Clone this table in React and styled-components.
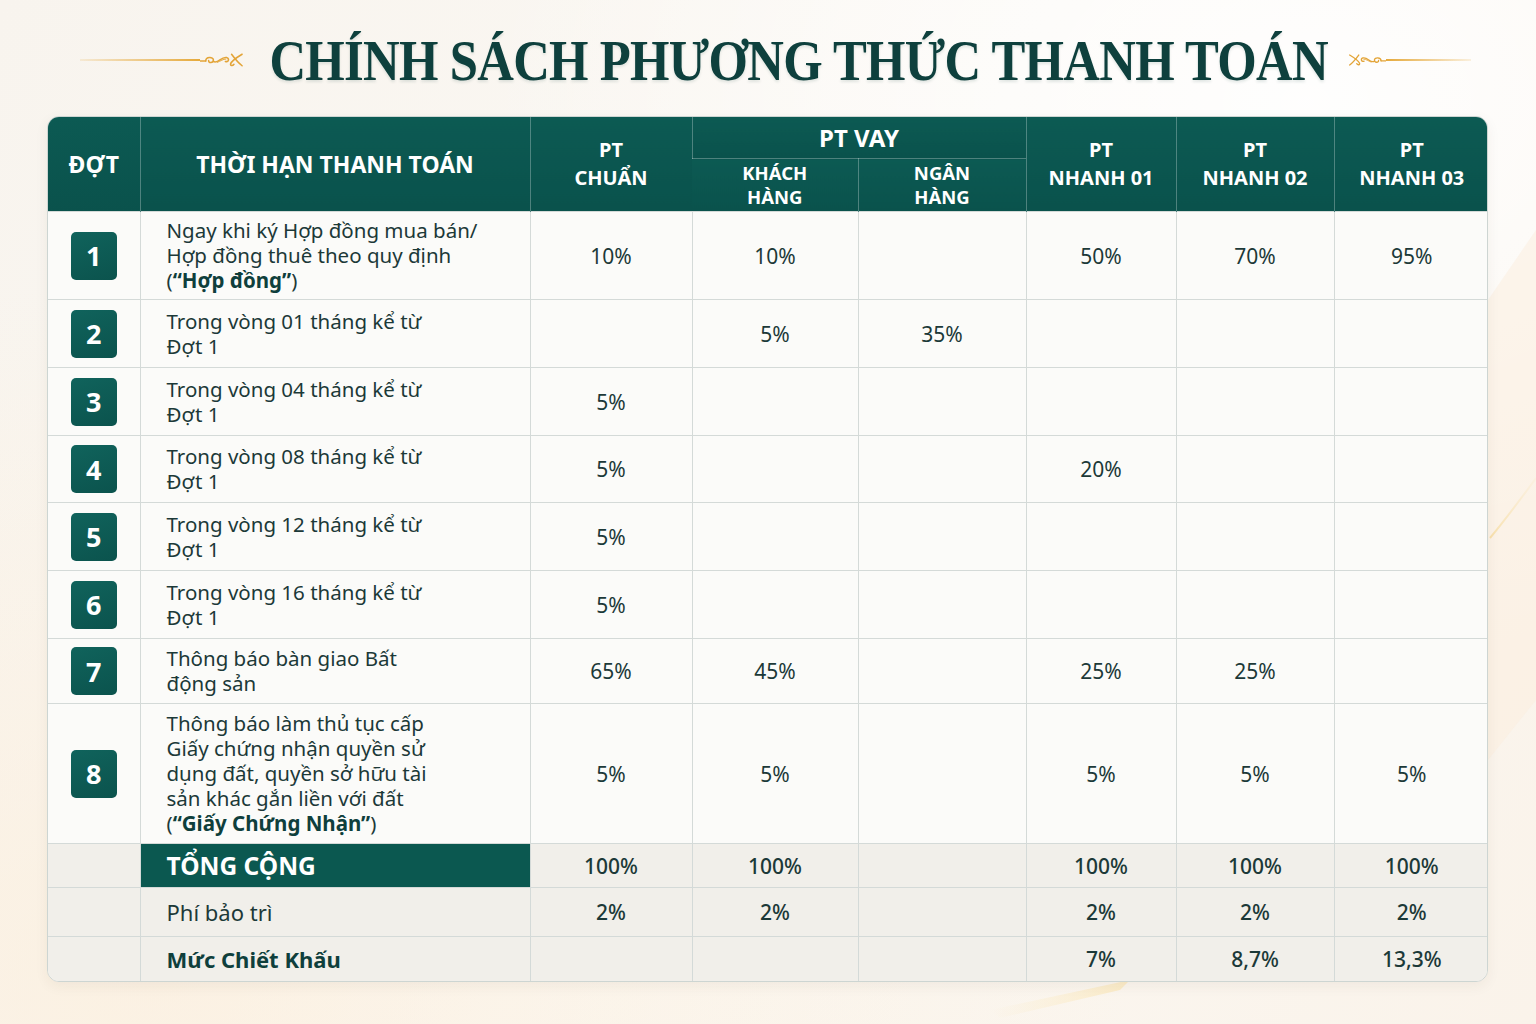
import React from "react";
import styled, { createGlobalStyle } from "styled-components";

const GlobalStyle = createGlobalStyle`
  html, body {
    margin: 0;
    padding: 0;
  }
  body {
    font-family: "Noto Sans", "Lato", sans-serif;
    background: #faf6f0;
  }
`;

const Page = styled.div`
  position: relative;
  width: 1536px;
  height: 1024px;
  overflow: hidden;
  box-sizing: border-box;
  padding: 28px 48px 0 47px;
  background:
    radial-gradient(ellipse at 85% 10%, rgba(255, 255, 255, 0.9), rgba(255, 255, 255, 0) 45%),
    radial-gradient(ellipse at 10% 95%, rgba(252, 236, 214, 0.55), rgba(255, 255, 255, 0) 50%),
    linear-gradient(120deg, #f8f4ee 0%, #fbf8f3 50%, #faf3ea 100%);
`;

const Decor = styled.svg`
  position: absolute;
  inset: 0;
  pointer-events: none;
`;

const TitleRow = styled.div`
  position: relative;
  display: flex;
  align-items: center;
  height: 64px;
  margin-bottom: 24px;
  padding-left: 33px;
`;

const Rule = styled.div`
  display: flex;
  align-items: center;
  flex-direction: ${(p) => (p.$flip ? "row-reverse" : "row")};
  margin: ${(p) => (p.$flip ? "0 0 0 20px" : "0 25px 0 0")};
`;

const RuleLine = styled.div`
  width: ${(p) => p.$w}px;
  height: 1.5px;
  background: linear-gradient(
    ${(p) => (p.$flip ? "270deg" : "90deg")},
    rgba(230, 170, 60, 0.15),
    #e6aa3c
  );
`;

const Flourish = styled.svg`
  width: ${(p) => (p.$flip ? 38 : 44)}px;
  height: 22px;
  transform: ${(p) => (p.$flip ? "scaleX(-1)" : "none")};
`;

const Title = styled.h1`
  margin: 0 -65px;
  font-family: "Liberation Serif", "DejaVu Serif", serif;
  font-weight: 700;
  font-size: 57px;
  letter-spacing: -0.8px;
  color: #0e403d;
  white-space: nowrap;
  transform: scaleX(0.89);
  text-shadow: 0 2px 3px rgba(14, 64, 61, 0.12);
`;

const Frame = styled.div`
  position: relative;
  border: 1px solid #cdd5d2;
  border-radius: 12px;
  overflow: hidden;
  background: #fbfbf9;
  box-shadow: 0 4px 14px rgba(60, 50, 30, 0.06);
`;

const Table = styled.table`
  width: 100%;
  border-collapse: collapse;
  table-layout: fixed;
  color: #1c3938;
`;

const Th = styled.th`
  height: ${(p) => p.$h}px;
  padding: 0 4px;
  background: linear-gradient(180deg, #0c5a53 0%, #0a524c 100%);
  color: #ffffff;
  font-weight: 700;
  font-size: ${(p) => p.$size || 23}px;
  line-height: ${(p) => p.$lh || 28}px;
  text-align: center;
  border-left: 1px solid rgba(255, 255, 255, 0.28);
  border-bottom: ${(p) => (p.$under ? "1px solid rgba(255,255,255,0.28)" : "none")};
  &:first-child {
    border-left: none;
  }
`;

const Td = styled.td`
  height: ${(p) => p.$h}px;
  padding: 0;
  text-align: center;
  vertical-align: middle;
  font-size: 21px;
  font-weight: ${(p) => (p.$strong ? 500 : 400)};
  border-left: 1px solid #d4dad8;
  border-top: 1px solid #d4dad8;
  background: ${(p) => (p.$sum ? "#f1efea" : "#fbfbf9")};
  &:first-child {
    border-left: none;
  }
`;

const DescCell = styled(Td)`
  text-align: left;
  padding-left: 26px;
  font-size: ${(p) => (p.$sum ? 22 : 20.5)}px;
  line-height: 25px;
  font-weight: ${(p) => (p.$bold ? 700 : 400)};
  color: ${(p) => (p.$bold ? "#0f3f3c" : "#1c3938")};
`;

const TotalCell = styled(Td)`
  text-align: left;
  padding-left: 26px;
  background: #0b5850;
  color: #ffffff;
  font-weight: 700;
  font-size: 24.5px;
`;

const Badge = styled.div`
  width: 46px;
  height: 48px;
  margin: 0 auto;
  border-radius: 5px;
  background: linear-gradient(160deg, #10635c, #0b534d);
  color: #ffffff;
  font-weight: 700;
  font-size: 27px;
  display: flex;
  align-items: center;
  justify-content: center;
`;

const Bold = styled.b`
  font-weight: 700;
  color: #0f3f3c;
`;

const FlourishArt = ({ flip }) => (
  <Flourish $flip={flip} viewBox="0 0 46 22" fill="none" stroke="#e3a437" strokeWidth="1.6" strokeLinecap="round">
    <path d="M0 12 H6" />
    <path d="M6 12 C6 7.5, 14 7.5, 14 11 C14 14.5, 8.5 14.5, 9 11.5" />
    <path d="M14 12.5 C19 15.5, 22 7, 28 8.5 C31 9.5, 30 13.5, 26.5 12.5" />
    <path d="M18 13.5 C22 12, 24 10, 27 10" strokeWidth="1" />
    <path d="M33 5 C36 9, 40 14, 44 17" />
    <path d="M44 5 C39 8, 33 12, 32 15 C31.5 17, 34 17.5, 35.5 15.5" />
  </Flourish>
);

const rows = [
  {
    n: 1,
    h: 87,
    desc: (
      <>
        Ngay khi ký Hợp đồng mua bán/
        <br />
        Hợp đồng thuê theo quy định
        <br />
        (<Bold>“Hợp đồng”</Bold>)
      </>
    ),
    vals: ["10%", "10%", "", "50%", "70%", "95%"],
  },
  { n: 2, h: 67, desc: <>Trong vòng 01 tháng kể từ<br />Đợt 1</>, vals: ["", "5%", "35%", "", "", ""] },
  { n: 3, h: 67, desc: <>Trong vòng 04 tháng kể từ<br />Đợt 1</>, vals: ["5%", "", "", "", "", ""] },
  { n: 4, h: 66, desc: <>Trong vòng 08 tháng kể từ<br />Đợt 1</>, vals: ["5%", "", "", "20%", "", ""] },
  { n: 5, h: 67, desc: <>Trong vòng 12 tháng kể từ<br />Đợt 1</>, vals: ["5%", "", "", "", "", ""] },
  { n: 6, h: 67, desc: <>Trong vòng 16 tháng kể từ<br />Đợt 1</>, vals: ["5%", "", "", "", "", ""] },
  { n: 7, h: 64, desc: <>Thông báo bàn giao Bất<br />động sản</>, vals: ["65%", "45%", "", "25%", "25%", ""] },
  {
    n: 8,
    h: 139,
    desc: (
      <>
        Thông báo làm thủ tục cấp
        <br />
        Giấy chứng nhận quyền sử
        <br />
        dụng đất, quyền sở hữu tài
        <br />
        sản khác gắn liền với đất
        <br />
        (<Bold>“Giấy Chứng Nhận”</Bold>)
      </>
    ),
    vals: ["5%", "5%", "", "5%", "5%", "5%"],
  },
];

const colWidths = [92, 390, 162, 166, 168, 150, 158, 155];

export default function App() {
  return (
    <Page>
      <GlobalStyle />
      <Decor width="1536" height="1024" viewBox="0 0 1536 1024">
        <defs>
          <linearGradient id="gold" x1="0" y1="1" x2="1" y2="0">
            <stop offset="0" stopColor="#f3cf6e" stopOpacity="0.9" />
            <stop offset="1" stopColor="#f7e2a6" stopOpacity="0.2" />
          </linearGradient>
          <linearGradient id="wedge" x1="0" y1="0" x2="1" y2="0">
            <stop offset="0" stopColor="#fbe9c0" stopOpacity="0" />
            <stop offset="1" stopColor="#fbe6b4" stopOpacity="0.7" />
          </linearGradient>
        </defs>
        <path d="M1490 538 C1505 520, 1520 500, 1536 478" stroke="url(#gold)" strokeWidth="2" fill="none" />
        <path d="M1488 300 L1536 230 L1536 700 L1488 760 Z" fill="#fbeedd" opacity="0.5" />
        <path d="M990 1010 L1130 980 L1120 990 L1000 1018 Z" fill="url(#wedge)" />
      </Decor>

      <TitleRow>
        <Rule>
          <RuleLine $w={120} />
          <FlourishArt />
        </Rule>
        <Title>CHÍNH SÁCH PHƯƠNG THỨC THANH TOÁN</Title>
        <Rule $flip>
          <RuleLine $flip $w={85} />
          <FlourishArt flip />
        </Rule>
      </TitleRow>

      <Frame>
        <Table>
          <colgroup>
            {colWidths.map((w, i) => (
              <col key={i} style={{ width: w }} />
            ))}
          </colgroup>
          <thead>
            <tr>
              <Th $h={41} rowSpan={2}>ĐỢT</Th>
              <Th $h={41} rowSpan={2}>THỜI HẠN THANH TOÁN</Th>
              <Th $h={41} rowSpan={2} $size={20}>PT<br />CHUẨN</Th>
              <Th $h={41} colSpan={2} $under $size={24}>PT VAY</Th>
              <Th $h={41} rowSpan={2} $size={20}>PT<br />NHANH 01</Th>
              <Th $h={41} rowSpan={2} $size={20}>PT<br />NHANH 02</Th>
              <Th $h={41} rowSpan={2} $size={20}>PT<br />NHANH 03</Th>
            </tr>
            <tr>
              <Th $h={52} $size={18.5} $lh={24}>KHÁCH<br />HÀNG</Th>
              <Th $h={52} $size={18.5} $lh={24}>NGÂN<br />HÀNG</Th>
            </tr>
          </thead>
          <tbody>
            {rows.map((r) => (
              <tr key={r.n}>
                <Td $h={r.h}>
                  <Badge>{r.n}</Badge>
                </Td>
                <DescCell $h={r.h}>{r.desc}</DescCell>
                {r.vals.map((v, i) => (
                  <Td key={i} $h={r.h}>{v}</Td>
                ))}
              </tr>
            ))}
            <tr>
              <Td $h={43} $sum />
              <TotalCell $h={43}>TỔNG CỘNG</TotalCell>
              {["100%", "100%", "", "100%", "100%", "100%"].map((v, i) => (
                <Td key={i} $h={43} $sum $strong>{v}</Td>
              ))}
            </tr>
            <tr>
              <Td $h={48} $sum />
              <DescCell $h={48} $sum>Phí bảo trì</DescCell>
              {["2%", "2%", "", "2%", "2%", "2%"].map((v, i) => (
                <Td key={i} $h={48} $sum $strong>{v}</Td>
              ))}
            </tr>
            <tr>
              <Td $h={44} $sum />
              <DescCell $h={44} $sum $bold>Mức Chiết Khấu</DescCell>
              {["", "", "", "7%", "8,7%", "13,3%"].map((v, i) => (
                <Td key={i} $h={44} $sum $strong>{v}</Td>
              ))}
            </tr>
          </tbody>
        </Table>
      </Frame>
    </Page>
  );
}
